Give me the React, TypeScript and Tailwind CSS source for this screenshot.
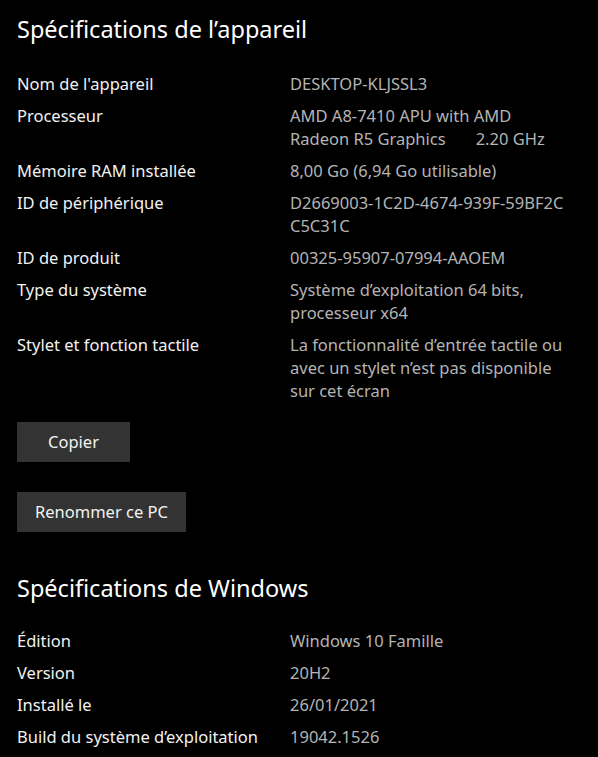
import React from "react";

type Row = { label: string; value: React.ReactNode };

const device: Row[] = [
  { label: "Nom de l'appareil", value: "DESKTOP-KLJSSL3" },
  {
    label: "Processeur",
    value: (
      <>
        AMD A8-7410 APU with AMD
        <br />
        <span className="whitespace-pre">Radeon R5 Graphics       2.20 GHz</span>
      </>
    ),
  },
  { label: "Mémoire RAM installée", value: "8,00 Go (6,94 Go utilisable)" },
  {
    label: "ID de périphérique",
    value: (
      <>
        D2669003-1C2D-4674-939F-59BF2C
        <br />
        C5C31C
      </>
    ),
  },
  { label: "ID de produit", value: "00325-95907-07994-AAOEM" },
  {
    label: "Type du système",
    value: (
      <>
        Système d’exploitation 64 bits,
        <br />
        processeur x64
      </>
    ),
  },
  {
    label: "Stylet et fonction tactile",
    value: (
      <>
        La fonctionnalité d’entrée tactile ou
        <br />
        avec un stylet n’est pas disponible
        <br />
        sur cet écran
      </>
    ),
  },
];

const windows: Row[] = [
  { label: "Édition", value: "Windows 10 Famille" },
  { label: "Version", value: "20H2" },
  { label: "Installé le", value: "26/01/2021" },
  { label: "Build du système d’exploitation", value: "19042.1526" },
];

function SpecRows({ rows }: { rows: Row[] }) {
  return (
    <div className="flex flex-col gap-[9px]">
      {rows.map((r) => (
        <div key={r.label} className="flex text-[16.5px] leading-[23px]">
          <div className="w-[273px] shrink-0 whitespace-nowrap text-[#f2f2f2]">{r.label}</div>
          <div className="w-[300px] whitespace-nowrap text-[#b4b4b4]">{r.value}</div>
        </div>
      ))}
    </div>
  );
}

export default function App() {
  return (
    <div
      className="min-h-[757px] w-[598px] overflow-hidden bg-black pl-[17px] text-white"
      style={{ fontFamily: '"Segoe UI", "Noto Sans", sans-serif' }}
    >
      <h1 className="pt-[13px] text-[23.5px] leading-[32px] font-normal">Spécifications de l’appareil</h1>

      <div className="mt-[27px]">
        <SpecRows rows={device} />
      </div>

      <div className="mt-[20px] flex flex-col items-start gap-[30px]">
        <button className="h-[40px] w-[113px] bg-[#333333] text-[16.5px] text-[#f2f2f2]">Copier</button>
        <button className="h-[40px] w-[169px] bg-[#333333] text-[16.5px] text-[#f2f2f2]">Renommer ce PC</button>
      </div>

      <h2 className="mt-[40px] text-[23.5px] leading-[32px] font-normal">Spécifications de Windows</h2>

      <div className="mt-[25px]">
        <SpecRows rows={windows} />
      </div>
    </div>
  );
}
